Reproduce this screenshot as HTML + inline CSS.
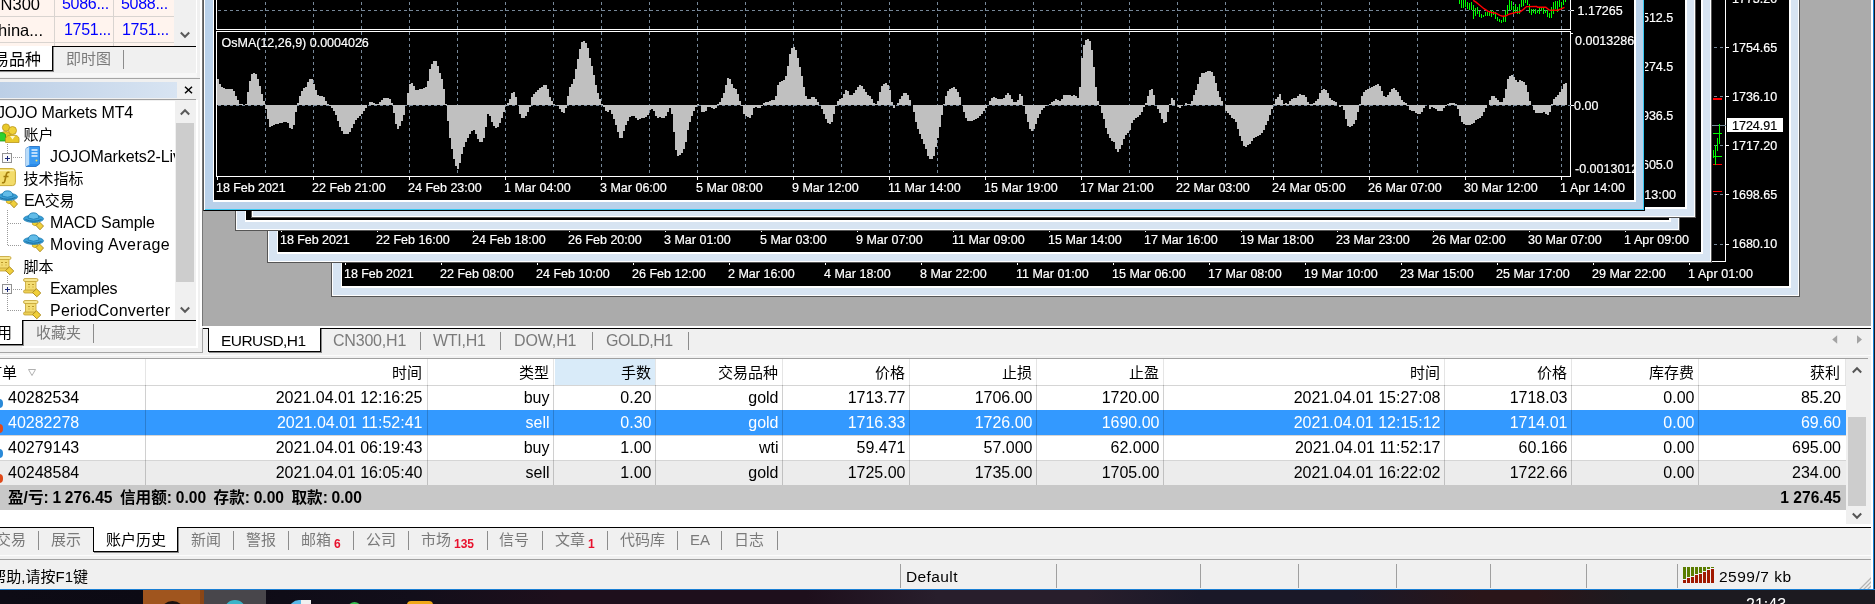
<!DOCTYPE html>
<html><head><meta charset="utf-8"><title>MT4</title><style>
*{box-sizing:border-box}
html,body{margin:0;padding:0}
body{width:1875px;height:604px;overflow:hidden;position:relative;background:#f0f0f0;font-family:"Liberation Sans","Noto Sans CJK SC",sans-serif;font-size:16px;color:#000}
.a{position:absolute}
.t{position:absolute;white-space:nowrap;line-height:20px;height:20px}
.g{color:#7a7a7a}
.w{position:absolute;background:#d7e4f2;border:1px solid #555;box-shadow:inset 1px 1px 0 #fff,inset -1px -1px 0 #fff}
.w.act{border-color:#5a5a5a #000 #000 #5a5a5a;box-shadow:inset 1px 1px 0 #fff,inset -1px -1px 0 #38c8f2}
.w .c{position:absolute;background:#000;border:2px solid #fff;border-top:0;border-left-width:1px;left:9px;right:8px;top:0;bottom:8px;overflow:hidden}
.ct{position:absolute;color:#fff;font-size:12.5px;line-height:14px;-webkit-text-stroke:0.2px #fff;white-space:nowrap;font-family:"Liberation Sans",sans-serif}
.sep{position:absolute;width:1px;background:#8c8c8c}
.vl{position:absolute;width:1px;background:#e3e3e3}
.row{position:absolute;left:0;width:1846px;height:25px}
.cell{position:absolute;top:-1px;height:25px;line-height:25px;text-align:right;white-space:nowrap;font-size:16px}
.hd .cell{font-size:15px}
</style></head><body>
<div class="a" id="mdi" style="left:202px;top:0;width:1669px;height:326px;background:#ababab;border-left:1px solid #777"></div>
<div class="w" id="w5" style="left:331px;top:-60px;width:1469px;height:357px;background:#d7e4f2"><div class="c"><span class="ct" style="left:2px;top:326px;;letter-spacing:-.05px">18 Feb 2021</span><i class="a" style="left:3px;top:321px;width:1px;height:3px;background:#fff"></i><span class="ct" style="left:98px;top:326px;">22 Feb 08:00</span><i class="a" style="left:99px;top:321px;width:1px;height:3px;background:#fff"></i><span class="ct" style="left:194px;top:326px;">24 Feb 10:00</span><i class="a" style="left:195px;top:321px;width:1px;height:3px;background:#fff"></i><span class="ct" style="left:290px;top:326px;">26 Feb 12:00</span><i class="a" style="left:291px;top:321px;width:1px;height:3px;background:#fff"></i><span class="ct" style="left:386px;top:326px;">2 Mar 16:00</span><i class="a" style="left:387px;top:321px;width:1px;height:3px;background:#fff"></i><span class="ct" style="left:482px;top:326px;">4 Mar 18:00</span><i class="a" style="left:483px;top:321px;width:1px;height:3px;background:#fff"></i><span class="ct" style="left:578px;top:326px;">8 Mar 22:00</span><i class="a" style="left:579px;top:321px;width:1px;height:3px;background:#fff"></i><span class="ct" style="left:674px;top:326px;">11 Mar 01:00</span><i class="a" style="left:675px;top:321px;width:1px;height:3px;background:#fff"></i><span class="ct" style="left:770px;top:326px;">15 Mar 06:00</span><i class="a" style="left:771px;top:321px;width:1px;height:3px;background:#fff"></i><span class="ct" style="left:866px;top:326px;">17 Mar 08:00</span><i class="a" style="left:867px;top:321px;width:1px;height:3px;background:#fff"></i><span class="ct" style="left:962px;top:326px;">19 Mar 10:00</span><i class="a" style="left:963px;top:321px;width:1px;height:3px;background:#fff"></i><span class="ct" style="left:1058px;top:326px;">23 Mar 15:00</span><i class="a" style="left:1059px;top:321px;width:1px;height:3px;background:#fff"></i><span class="ct" style="left:1154px;top:326px;">25 Mar 17:00</span><i class="a" style="left:1155px;top:321px;width:1px;height:3px;background:#fff"></i><span class="ct" style="left:1250px;top:326px;">29 Mar 22:00</span><i class="a" style="left:1251px;top:321px;width:1px;height:3px;background:#fff"></i><span class="ct" style="left:1346px;top:326px;;letter-spacing:.1px">1 Apr 01:00</span><i class="a" style="left:1347px;top:321px;width:1px;height:3px;background:#fff"></i><i class="a" style="left:1383px;top:0;width:1px;height:321px;background:#fff"></i><i class="a" style="left:1370px;top:320px;width:14px;height:1px;background:#fff"></i><span class="ct" style="left:1390px;top:50.6px;">1773.20</span><i class="a" style="left:1383px;top:58px;width:4px;height:1px;background:#fff"></i><i class="a" style="left:1372px;top:58px;width:9px;height:1px;background:repeating-linear-gradient(90deg,#778899 0 3px,transparent 3px 6px)"></i><span class="ct" style="left:1390px;top:99.5px;">1754.65</span><i class="a" style="left:1383px;top:106px;width:4px;height:1px;background:#fff"></i><i class="a" style="left:1372px;top:106px;width:9px;height:1px;background:repeating-linear-gradient(90deg,#778899 0 3px,transparent 3px 6px)"></i><span class="ct" style="left:1390px;top:148.7px;">1736.10</span><i class="a" style="left:1383px;top:155px;width:4px;height:1px;background:#fff"></i><i class="a" style="left:1372px;top:155px;width:9px;height:1px;background:repeating-linear-gradient(90deg,#778899 0 3px,transparent 3px 6px)"></i><span class="ct" style="left:1390px;top:197.6px;">1717.20</span><i class="a" style="left:1383px;top:204px;width:4px;height:1px;background:#fff"></i><i class="a" style="left:1372px;top:204px;width:9px;height:1px;background:repeating-linear-gradient(90deg,#778899 0 3px,transparent 3px 6px)"></i><span class="ct" style="left:1390px;top:246.8px;">1698.65</span><i class="a" style="left:1383px;top:253px;width:4px;height:1px;background:#fff"></i><i class="a" style="left:1372px;top:253px;width:9px;height:1px;background:repeating-linear-gradient(90deg,#778899 0 3px,transparent 3px 6px)"></i><span class="ct" style="left:1390px;top:296.2px;">1680.10</span><i class="a" style="left:1383px;top:303px;width:4px;height:1px;background:#fff"></i><i class="a" style="left:1372px;top:303px;width:9px;height:1px;background:repeating-linear-gradient(90deg,#778899 0 3px,transparent 3px 6px)"></i><span class="ct" style="left:1385px;top:177px;width:56px;height:14px;background:#fff;color:#000;line-height:16px;padding-left:5px;-webkit-text-stroke:0.2px #000">1724.91</span><i class="a" style="left:1370px;top:184px;width:14px;height:1px;background:#778899"></i><i class="a" style="left:1371px;top:157px;width:9px;height:2px;background:#f00"></i><i class="a" style="left:1371px;top:250px;width:9px;height:1px;background:#f00"></i><i class="a" style="left:1371px;top:223px;width:9px;height:1px;background:#f00"></i><svg class="a" style="left:1369px;top:179px" width="14" height="46" viewBox="0 0 14 46"><path d="M8.5 4v20M6.5 18v13M4.5 25v20M2.5 30v8M2 13.5h9M2 36.5h9" stroke="#0f0" stroke-width="1" fill="none" shape-rendering="crispEdges"/></svg></div></div>
<div class="w" id="w4" style="left:267px;top:-60px;width:1445px;height:323px;background:#d7e4f2"><div class="c"><span class="ct" style="left:2px;top:292px;;letter-spacing:-.05px">18 Feb 2021</span><i class="a" style="left:3px;top:289px;width:1px;height:2px;background:#fff"></i><span class="ct" style="left:98px;top:292px;">22 Feb 16:00</span><i class="a" style="left:99px;top:289px;width:1px;height:2px;background:#fff"></i><span class="ct" style="left:194px;top:292px;">24 Feb 18:00</span><i class="a" style="left:195px;top:289px;width:1px;height:2px;background:#fff"></i><span class="ct" style="left:290px;top:292px;">26 Feb 20:00</span><i class="a" style="left:291px;top:289px;width:1px;height:2px;background:#fff"></i><span class="ct" style="left:386px;top:292px;">3 Mar 01:00</span><i class="a" style="left:387px;top:289px;width:1px;height:2px;background:#fff"></i><span class="ct" style="left:482px;top:292px;">5 Mar 03:00</span><i class="a" style="left:483px;top:289px;width:1px;height:2px;background:#fff"></i><span class="ct" style="left:578px;top:292px;">9 Mar 07:00</span><i class="a" style="left:579px;top:289px;width:1px;height:2px;background:#fff"></i><span class="ct" style="left:674px;top:292px;">11 Mar 09:00</span><i class="a" style="left:675px;top:289px;width:1px;height:2px;background:#fff"></i><span class="ct" style="left:770px;top:292px;">15 Mar 14:00</span><i class="a" style="left:771px;top:289px;width:1px;height:2px;background:#fff"></i><span class="ct" style="left:866px;top:292px;">17 Mar 16:00</span><i class="a" style="left:867px;top:289px;width:1px;height:2px;background:#fff"></i><span class="ct" style="left:962px;top:292px;">19 Mar 18:00</span><i class="a" style="left:963px;top:289px;width:1px;height:2px;background:#fff"></i><span class="ct" style="left:1058px;top:292px;">23 Mar 23:00</span><i class="a" style="left:1059px;top:289px;width:1px;height:2px;background:#fff"></i><span class="ct" style="left:1154px;top:292px;">26 Mar 02:00</span><i class="a" style="left:1155px;top:289px;width:1px;height:2px;background:#fff"></i><span class="ct" style="left:1250px;top:292px;">30 Mar 07:00</span><i class="a" style="left:1251px;top:289px;width:1px;height:2px;background:#fff"></i><span class="ct" style="left:1346px;top:292px;;letter-spacing:.1px">1 Apr 09:00</span><i class="a" style="left:1347px;top:289px;width:1px;height:2px;background:#fff"></i></div></div>
<div class="w" id="w3" style="left:235px;top:-60px;width:1445px;height:291px;background:#d7e4f2"><div class="c"></div></div>
<div class="w" id="w2" style="left:251px;top:-60px;width:1445px;height:278px;background:#d7e4f2"><div class="c"><span class="ct" style="left:1373px;top:69.75px;">5512.5</span><span class="ct" style="left:1373px;top:118.75px;">5274.5</span><span class="ct" style="left:1373px;top:167.75px;">4936.5</span><span class="ct" style="left:1373px;top:216.75px;">4605.0</span><span class="ct" style="left:1349px;top:247px;;letter-spacing:.1px">1 Apr 13:00</span></div></div>
<div class="w act" id="w1" style="left:203px;top:-60px;width:1442px;height:271px;background:#b9d1ea"><div class="c"><div class="a" style="left:2px;top:49px;width:1355px;height:40px;border:1px solid #fff"></div><div class="a" style="left:2px;top:90px;width:1355px;height:146px;border:1px solid #fff"></div><svg class="a" style="left:3px;top:59px" width="1354" height="176" viewBox="217 0 1354 176" shape-rendering="crispEdges"><path d="M265.5 2V176M313.5 2V176M361.5 2V176M409.5 2V176M457.5 2V176M505.5 2V176M553.5 2V176M601.5 2V176M649.5 2V176M697.5 2V176M745.5 2V176M793.5 2V176M841.5 2V176M889.5 2V176M937.5 2V176M985.5 2V176M1033.5 2V176M1081.5 2V176M1129.5 2V176M1177.5 2V176M1225.5 2V176M1273.5 2V176M1321.5 2V176M1369.5 2V176M1417.5 2V176M1465.5 2V176M1513.5 2V176M1561.5 2V176" stroke="#778899" stroke-width="1" stroke-dasharray="3 3" fill="none"/><path d="M218 10.5H1571" stroke="#778899" stroke-width="1" stroke-dasharray="3 3" fill="none"/><path d="M218 105.5H1571" stroke="#778899" stroke-width="1" stroke-dasharray="3 3" fill="none"/><path d="M217 79h2v26h-2zM219 84h2v21h-2zM221 87h2v18h-2zM223 88h2v17h-2zM225 89h2v16h-2zM227 89h2v16h-2zM229 89h2v16h-2zM231 89h2v16h-2zM233 91h2v14h-2zM235 96h2v9h-2zM237 100h2v5h-2zM239 104h2v1h-2zM241 104h2v1h-2zM245 104h2v1h-2zM247 92h2v13h-2zM249 81h2v24h-2zM251 74h2v31h-2zM253 73h2v32h-2zM255 74h2v31h-2zM257 79h2v26h-2zM259 86h2v19h-2zM261 94h2v11h-2zM263 101h2v4h-2zM265 105h2v4h-2zM267 105h2v14h-2zM269 105h2v22h-2zM271 105h2v21h-2zM273 105h2v20h-2zM275 105h2v19h-2zM277 105h2v19h-2zM279 105h2v18h-2zM281 105h2v18h-2zM283 105h2v17h-2zM285 105h2v17h-2zM287 105h2v18h-2zM289 105h2v23h-2zM291 105h2v24h-2zM293 105h2v20h-2zM295 105h2v7h-2zM297 103h2v2h-2zM299 96h2v9h-2zM301 91h2v14h-2zM303 88h2v17h-2zM305 87h2v18h-2zM307 82h2v23h-2zM309 79h2v26h-2zM311 79h2v26h-2zM313 84h2v21h-2zM315 90h2v15h-2zM317 95h2v10h-2zM319 96h2v9h-2zM321 96h2v9h-2zM323 97h2v8h-2zM325 101h2v4h-2zM327 104h2v1h-2zM329 105h2v1h-2zM331 105h2v3h-2zM333 105h2v6h-2zM335 105h2v10h-2zM337 105h2v16h-2zM339 105h2v22h-2zM341 105h2v26h-2zM343 105h2v29h-2zM345 105h2v29h-2zM347 105h2v29h-2zM349 105h2v27h-2zM351 105h2v23h-2zM353 105h2v19h-2zM355 105h2v15h-2zM357 105h2v13h-2zM359 105h2v11h-2zM361 105h2v9h-2zM363 105h2v6h-2zM365 105h2v3h-2zM369 102h2v3h-2zM371 102h2v3h-2zM373 103h2v2h-2zM375 104h2v1h-2zM377 104h2v1h-2zM379 102h2v3h-2zM381 100h2v5h-2zM383 98h2v7h-2zM385 98h2v7h-2zM387 98h2v7h-2zM389 99h2v6h-2zM391 103h2v2h-2zM393 105h2v8h-2zM395 105h2v19h-2zM397 105h2v24h-2zM399 105h2v21h-2zM401 105h2v16h-2zM403 105h2v10h-2zM407 93h2v12h-2zM409 84h2v21h-2zM411 83h2v22h-2zM413 86h2v19h-2zM415 90h2v15h-2zM417 90h2v15h-2zM419 89h2v16h-2zM421 89h2v16h-2zM423 88h2v17h-2zM425 87h2v18h-2zM427 81h2v24h-2zM429 69h2v36h-2zM431 64h2v41h-2zM433 61h2v44h-2zM435 61h2v44h-2zM437 66h2v39h-2zM439 73h2v32h-2zM441 79h2v26h-2zM443 89h2v16h-2zM445 104h2v1h-2zM447 105h2v16h-2zM449 105h2v33h-2zM451 105h2v44h-2zM453 105h2v54h-2zM455 105h2v61h-2zM457 105h2v64h-2zM459 105h2v58h-2zM461 105h2v49h-2zM463 105h2v42h-2zM465 105h2v37h-2zM467 105h2v33h-2zM469 105h2v29h-2zM471 105h2v26h-2zM473 105h2v25h-2zM475 105h2v29h-2zM477 105h2v34h-2zM479 105h2v37h-2zM481 105h2v37h-2zM483 105h2v33h-2zM485 105h2v22h-2zM487 105h2v9h-2zM489 105h2v11h-2zM491 105h2v17h-2zM493 105h2v21h-2zM495 105h2v23h-2zM497 105h2v22h-2zM499 105h2v18h-2zM501 105h2v13h-2zM503 105h2v7h-2zM505 105h2v1h-2zM507 103h2v2h-2zM509 99h2v6h-2zM511 93h2v12h-2zM513 92h2v13h-2zM515 97h2v8h-2zM519 105h2v9h-2zM521 105h2v13h-2zM523 105h2v13h-2zM525 105h2v11h-2zM527 105h2v7h-2zM529 105h2v2h-2zM531 97h2v8h-2zM533 94h2v11h-2zM535 92h2v13h-2zM537 90h2v15h-2zM539 88h2v17h-2zM541 87h2v18h-2zM543 85h2v20h-2zM545 85h2v20h-2zM547 89h2v16h-2zM549 97h2v8h-2zM551 101h2v4h-2zM553 104h2v1h-2zM557 105h2v1h-2zM559 105h2v4h-2zM561 105h2v7h-2zM563 105h2v8h-2zM565 105h2v3h-2zM567 96h2v9h-2zM569 87h2v18h-2zM571 84h2v21h-2zM573 79h2v26h-2zM575 69h2v36h-2zM577 59h2v46h-2zM579 49h2v56h-2zM581 42h2v63h-2zM583 41h2v64h-2zM585 43h2v62h-2zM587 48h2v57h-2zM589 58h2v47h-2zM591 66h2v39h-2zM593 75h2v30h-2zM595 85h2v20h-2zM597 93h2v12h-2zM599 99h2v6h-2zM601 104h2v1h-2zM603 105h2v2h-2zM605 105h2v6h-2zM607 105h2v7h-2zM609 105h2v5h-2zM611 105h2v9h-2zM613 105h2v14h-2zM615 105h2v20h-2zM617 105h2v27h-2zM619 105h2v33h-2zM621 105h2v33h-2zM623 105h2v26h-2zM625 105h2v20h-2zM627 105h2v16h-2zM629 105h2v12h-2zM631 105h2v11h-2zM633 105h2v11h-2zM635 105h2v13h-2zM637 105h2v15h-2zM639 105h2v14h-2zM641 105h2v13h-2zM643 105h2v13h-2zM645 105h2v12h-2zM647 105h2v10h-2zM649 105h2v5h-2zM651 105h2v4h-2zM653 105h2v6h-2zM655 105h2v11h-2zM657 105h2v13h-2zM659 105h2v12h-2zM661 105h2v13h-2zM663 105h2v13h-2zM665 105h2v11h-2zM667 105h2v7h-2zM669 105h2v3h-2zM671 105h2v9h-2zM673 105h2v27h-2zM675 105h2v45h-2zM677 105h2v51h-2zM679 105h2v50h-2zM681 105h2v48h-2zM683 105h2v44h-2zM685 105h2v37h-2zM687 105h2v25h-2zM689 105h2v17h-2zM691 105h2v11h-2zM693 105h2v6h-2zM695 105h2v2h-2zM697 104h2v1h-2zM701 105h2v7h-2zM703 105h2v7h-2zM705 105h2v6h-2zM707 105h2v2h-2zM709 105h2v2h-2zM711 105h2v3h-2zM713 105h2v4h-2zM715 105h2v3h-2zM717 104h2v1h-2zM719 102h2v3h-2zM721 98h2v7h-2zM723 93h2v12h-2zM725 85h2v20h-2zM727 78h2v27h-2zM729 79h2v26h-2zM731 84h2v21h-2zM733 88h2v17h-2zM735 89h2v16h-2zM737 94h2v11h-2zM739 101h2v4h-2zM741 105h2v1h-2zM743 105h2v9h-2zM745 105h2v11h-2zM747 105h2v12h-2zM749 105h2v13h-2zM751 105h2v10h-2zM753 105h2v3h-2zM755 105h2v2h-2zM757 105h2v3h-2zM759 105h2v3h-2zM761 105h2v1h-2zM763 103h2v2h-2zM765 102h2v3h-2zM767 102h2v3h-2zM769 101h2v4h-2zM771 100h2v5h-2zM773 100h2v5h-2zM775 96h2v9h-2zM777 85h2v20h-2zM779 82h2v23h-2zM781 81h2v24h-2zM783 80h2v25h-2zM785 76h2v29h-2zM787 66h2v39h-2zM789 54h2v51h-2zM791 48h2v57h-2zM793 47h2v58h-2zM795 50h2v55h-2zM797 58h2v47h-2zM799 67h2v38h-2zM801 76h2v29h-2zM803 87h2v18h-2zM805 96h2v9h-2zM807 99h2v6h-2zM809 99h2v6h-2zM811 97h2v8h-2zM813 97h2v8h-2zM815 99h2v6h-2zM817 102h2v3h-2zM821 105h2v4h-2zM823 105h2v9h-2zM825 105h2v14h-2zM827 105h2v18h-2zM829 105h2v19h-2zM831 105h2v17h-2zM833 105h2v9h-2zM835 105h2v1h-2zM837 101h2v4h-2zM839 99h2v6h-2zM841 98h2v7h-2zM843 94h2v11h-2zM845 90h2v15h-2zM847 91h2v14h-2zM849 95h2v10h-2zM851 95h2v10h-2zM853 93h2v12h-2zM855 90h2v15h-2zM857 87h2v18h-2zM859 85h2v20h-2zM861 86h2v19h-2zM863 89h2v16h-2zM865 92h2v13h-2zM867 95h2v10h-2zM869 96h2v9h-2zM871 99h2v6h-2zM873 103h2v2h-2zM875 104h2v1h-2zM877 101h2v4h-2zM879 92h2v13h-2zM881 86h2v19h-2zM883 84h2v21h-2zM885 83h2v22h-2zM887 85h2v20h-2zM889 90h2v15h-2zM891 102h2v3h-2zM893 105h2v3h-2zM897 103h2v2h-2zM899 99h2v6h-2zM901 96h2v9h-2zM903 93h2v12h-2zM905 93h2v12h-2zM907 95h2v10h-2zM909 100h2v5h-2zM913 105h2v7h-2zM915 105h2v17h-2zM917 105h2v24h-2zM919 105h2v29h-2zM921 105h2v34h-2zM923 105h2v39h-2zM925 105h2v44h-2zM927 105h2v51h-2zM929 105h2v54h-2zM931 105h2v54h-2zM933 105h2v51h-2zM935 105h2v42h-2zM937 105h2v33h-2zM939 105h2v22h-2zM941 105h2v10h-2zM943 104h2v1h-2zM945 96h2v9h-2zM947 91h2v14h-2zM949 89h2v16h-2zM951 88h2v17h-2zM953 87h2v18h-2zM955 89h2v16h-2zM957 92h2v13h-2zM959 97h2v8h-2zM963 105h2v7h-2zM965 105h2v13h-2zM967 105h2v16h-2zM969 105h2v16h-2zM971 105h2v16h-2zM973 105h2v15h-2zM975 105h2v14h-2zM977 105h2v13h-2zM979 105h2v11h-2zM981 105h2v9h-2zM983 105h2v6h-2zM985 105h2v3h-2zM989 101h2v4h-2zM991 98h2v7h-2zM993 97h2v8h-2zM995 98h2v7h-2zM997 99h2v6h-2zM999 99h2v6h-2zM1001 99h2v6h-2zM1003 98h2v7h-2zM1005 95h2v10h-2zM1007 93h2v12h-2zM1009 95h2v10h-2zM1011 99h2v6h-2zM1013 102h2v3h-2zM1015 102h2v3h-2zM1017 100h2v5h-2zM1019 94h2v11h-2zM1021 96h2v9h-2zM1023 105h2v1h-2zM1025 105h2v9h-2zM1027 105h2v17h-2zM1029 105h2v24h-2zM1031 105h2v26h-2zM1033 105h2v24h-2zM1035 105h2v19h-2zM1037 105h2v13h-2zM1039 105h2v9h-2zM1041 105h2v5h-2zM1043 105h2v3h-2zM1045 105h2v1h-2zM1049 104h2v1h-2zM1051 102h2v3h-2zM1053 101h2v4h-2zM1055 99h2v6h-2zM1057 100h2v5h-2zM1059 101h2v4h-2zM1061 99h2v6h-2zM1063 95h2v10h-2zM1065 95h2v10h-2zM1067 95h2v10h-2zM1069 95h2v10h-2zM1071 96h2v9h-2zM1073 95h2v10h-2zM1075 96h2v9h-2zM1077 98h2v7h-2zM1079 87h2v18h-2zM1081 58h2v47h-2zM1083 45h2v60h-2zM1085 40h2v65h-2zM1087 39h2v66h-2zM1089 41h2v64h-2zM1091 50h2v55h-2zM1093 67h2v38h-2zM1095 87h2v18h-2zM1097 101h2v4h-2zM1099 105h2v1h-2zM1101 105h2v8h-2zM1103 105h2v14h-2zM1105 105h2v23h-2zM1107 105h2v29h-2zM1109 105h2v33h-2zM1111 105h2v36h-2zM1113 105h2v37h-2zM1115 105h2v44h-2zM1117 105h2v47h-2zM1119 105h2v44h-2zM1121 105h2v40h-2zM1123 105h2v34h-2zM1125 105h2v30h-2zM1127 105h2v28h-2zM1129 105h2v25h-2zM1131 105h2v18h-2zM1133 105h2v15h-2zM1135 105h2v13h-2zM1137 105h2v12h-2zM1139 105h2v10h-2zM1141 105h2v7h-2zM1143 105h2v2h-2zM1145 103h2v2h-2zM1147 96h2v9h-2zM1149 90h2v15h-2zM1151 89h2v16h-2zM1153 95h2v10h-2zM1157 105h2v4h-2zM1159 105h2v8h-2zM1161 105h2v14h-2zM1163 105h2v18h-2zM1165 105h2v17h-2zM1167 105h2v7h-2zM1169 104h2v1h-2zM1171 98h2v7h-2zM1173 100h2v5h-2zM1177 105h2v2h-2zM1179 105h2v3h-2zM1181 105h2v1h-2zM1185 103h2v2h-2zM1187 104h2v1h-2zM1189 104h2v1h-2zM1191 101h2v4h-2zM1193 95h2v10h-2zM1195 90h2v15h-2zM1197 84h2v21h-2zM1199 77h2v28h-2zM1201 73h2v32h-2zM1203 73h2v32h-2zM1205 72h2v33h-2zM1207 71h2v34h-2zM1209 71h2v34h-2zM1211 72h2v33h-2zM1213 76h2v29h-2zM1215 83h2v22h-2zM1217 91h2v14h-2zM1219 97h2v8h-2zM1221 101h2v4h-2zM1225 105h2v6h-2zM1227 105h2v8h-2zM1229 105h2v10h-2zM1231 105h2v13h-2zM1233 105h2v14h-2zM1235 105h2v17h-2zM1237 105h2v24h-2zM1239 105h2v31h-2zM1241 105h2v36h-2zM1243 105h2v41h-2zM1245 105h2v42h-2zM1247 105h2v40h-2zM1249 105h2v39h-2zM1251 105h2v36h-2zM1253 105h2v33h-2zM1255 105h2v32h-2zM1257 105h2v31h-2zM1259 105h2v30h-2zM1261 105h2v28h-2zM1263 105h2v25h-2zM1265 105h2v20h-2zM1267 105h2v16h-2zM1269 105h2v10h-2zM1271 105h2v4h-2zM1273 104h2v1h-2zM1275 99h2v6h-2zM1277 97h2v8h-2zM1279 94h2v11h-2zM1281 100h2v5h-2zM1283 104h2v1h-2zM1285 103h2v2h-2zM1287 104h2v1h-2zM1289 101h2v4h-2zM1291 99h2v6h-2zM1293 98h2v7h-2zM1295 98h2v7h-2zM1297 96h2v9h-2zM1299 94h2v11h-2zM1301 95h2v10h-2zM1303 95h2v10h-2zM1305 97h2v8h-2zM1307 102h2v3h-2zM1309 104h2v1h-2zM1311 104h2v1h-2zM1313 103h2v2h-2zM1315 101h2v4h-2zM1317 99h2v6h-2zM1319 93h2v12h-2zM1321 90h2v15h-2zM1323 89h2v16h-2zM1325 90h2v15h-2zM1327 93h2v12h-2zM1329 98h2v7h-2zM1331 100h2v5h-2zM1333 101h2v4h-2zM1335 102h2v3h-2zM1339 105h2v2h-2zM1341 105h2v1h-2zM1343 105h2v5h-2zM1345 105h2v14h-2zM1347 105h2v21h-2zM1349 105h2v22h-2zM1351 105h2v21h-2zM1353 105h2v19h-2zM1355 105h2v15h-2zM1357 105h2v7h-2zM1359 104h2v1h-2zM1361 96h2v9h-2zM1363 92h2v13h-2zM1365 90h2v15h-2zM1367 89h2v16h-2zM1369 88h2v17h-2zM1371 87h2v18h-2zM1373 86h2v19h-2zM1375 85h2v20h-2zM1377 84h2v21h-2zM1379 86h2v19h-2zM1381 91h2v14h-2zM1383 96h2v9h-2zM1385 97h2v8h-2zM1387 95h2v10h-2zM1389 92h2v13h-2zM1391 89h2v16h-2zM1393 88h2v17h-2zM1395 90h2v15h-2zM1397 92h2v13h-2zM1399 96h2v9h-2zM1401 100h2v5h-2zM1403 102h2v3h-2zM1405 103h2v2h-2zM1407 105h2v1h-2zM1409 105h2v5h-2zM1411 105h2v6h-2zM1413 105h2v6h-2zM1415 105h2v8h-2zM1417 105h2v9h-2zM1419 105h2v9h-2zM1421 105h2v7h-2zM1423 105h2v3h-2zM1429 105h2v4h-2zM1431 105h2v2h-2zM1433 105h2v3h-2zM1435 105h2v4h-2zM1437 105h2v6h-2zM1439 105h2v6h-2zM1441 105h2v6h-2zM1443 105h2v3h-2zM1445 105h2v1h-2zM1447 104h2v1h-2zM1449 103h2v2h-2zM1451 103h2v2h-2zM1453 103h2v2h-2zM1455 104h2v1h-2zM1457 105h2v4h-2zM1459 105h2v11h-2zM1461 105h2v17h-2zM1463 105h2v19h-2zM1465 105h2v20h-2zM1467 105h2v20h-2zM1469 105h2v20h-2zM1471 105h2v19h-2zM1473 105h2v18h-2zM1475 105h2v15h-2zM1477 105h2v14h-2zM1479 105h2v13h-2zM1481 105h2v11h-2zM1483 105h2v7h-2zM1485 105h2v3h-2zM1489 100h2v5h-2zM1491 96h2v9h-2zM1493 96h2v9h-2zM1495 98h2v7h-2zM1497 100h2v5h-2zM1499 102h2v3h-2zM1501 102h2v3h-2zM1503 98h2v7h-2zM1505 89h2v16h-2zM1507 79h2v26h-2zM1509 76h2v29h-2zM1511 75h2v30h-2zM1513 77h2v28h-2zM1515 80h2v25h-2zM1517 82h2v23h-2zM1519 80h2v25h-2zM1521 81h2v24h-2zM1523 82h2v23h-2zM1525 85h2v20h-2zM1527 92h2v13h-2zM1529 101h2v4h-2zM1533 105h2v5h-2zM1535 105h2v8h-2zM1537 105h2v8h-2zM1539 105h2v8h-2zM1541 105h2v8h-2zM1543 105h2v7h-2zM1545 105h2v9h-2zM1547 105h2v10h-2zM1549 105h2v7h-2zM1551 104h2v1h-2zM1553 99h2v6h-2zM1555 97h2v8h-2zM1557 95h2v10h-2zM1559 92h2v13h-2zM1561 89h2v16h-2zM1563 84h2v21h-2zM1565 83h2v22h-2z" fill="#c0c0c0"/><path d="M1459.5 0V4M1461.5 0V8M1463.5 0V8M1465.5 0V7M1467.5 2V9M1469.5 3V10M1471.5 2V10M1473.5 5V19M1475.5 8V16M1477.5 7V14M1479.5 11V17M1481.5 14V18M1483.5 15V17M1485.5 12V16M1487.5 12V16M1489.5 12V16M1491.5 10V17M1493.5 11V15M1495.5 12V19M1497.5 17V21M1499.5 19V22M1501.5 20V23M1503.5 17V22M1505.5 10V22M1507.5 5V14M1509.5 0V10M1511.5 1V10M1513.5 6V14M1515.5 4V12M1517.5 7V14M1519.5 4V14M1521.5 0V7M1523.5 0V6M1525.5 0V3M1527.5 0V5M1529.5 4V13M1531.5 9V15M1533.5 9V13M1535.5 9V14M1537.5 10V13M1539.5 8V14M1541.5 8V11M1543.5 8V14M1545.5 10V13M1547.5 10V17M1549.5 13V18M1551.5 7V18M1553.5 2V14M1555.5 1V9M1557.5 1V12M1559.5 0V7M1561.5 2V9M1563.5 0V5M1565.5 0V2" stroke="#00ff00" stroke-width="1" fill="none"/><path d="M1473.2 0.35 L1476 2.1 L1479.8 5.2 L1484 8.7 L1487.8 11.1 L1491.6 12.5 L1495.8 13.2 L1499.9 15.4 L1502.7 16.2 L1505.5 16.0 L1508.5 14.3 L1512.6 13.3 L1515.9 12.4 L1519.8 12.0 L1523.2 9.6 L1526.6 6.6 L1536.6 6.5 L1537.6 7.3 L1545.8 7.3 L1549.2 10.0 L1557.2 10.3 L1561.2 8.9 L1564.5 7.3" stroke="#ff0000" stroke-width="1.4" fill="none" shape-rendering="auto"/></svg><span class="ct" style="left:7.5px;top:94.7px;">OsMA(12,26,9) 0.0004026</span><span class="ct" style="left:2px;top:240px;;letter-spacing:-.05px">18 Feb 2021</span><i class="a" style="left:3px;top:236px;width:1px;height:3px;background:#fff"></i><span class="ct" style="left:98px;top:240px;">22 Feb 21:00</span><i class="a" style="left:99px;top:236px;width:1px;height:3px;background:#fff"></i><span class="ct" style="left:194px;top:240px;">24 Feb 23:00</span><i class="a" style="left:195px;top:236px;width:1px;height:3px;background:#fff"></i><span class="ct" style="left:290px;top:240px;">1 Mar 04:00</span><i class="a" style="left:291px;top:236px;width:1px;height:3px;background:#fff"></i><span class="ct" style="left:386px;top:240px;">3 Mar 06:00</span><i class="a" style="left:387px;top:236px;width:1px;height:3px;background:#fff"></i><span class="ct" style="left:482px;top:240px;">5 Mar 08:00</span><i class="a" style="left:483px;top:236px;width:1px;height:3px;background:#fff"></i><span class="ct" style="left:578px;top:240px;">9 Mar 12:00</span><i class="a" style="left:579px;top:236px;width:1px;height:3px;background:#fff"></i><span class="ct" style="left:674px;top:240px;">11 Mar 14:00</span><i class="a" style="left:675px;top:236px;width:1px;height:3px;background:#fff"></i><span class="ct" style="left:770px;top:240px;">15 Mar 19:00</span><i class="a" style="left:771px;top:236px;width:1px;height:3px;background:#fff"></i><span class="ct" style="left:866px;top:240px;">17 Mar 21:00</span><i class="a" style="left:867px;top:236px;width:1px;height:3px;background:#fff"></i><span class="ct" style="left:962px;top:240px;">22 Mar 03:00</span><i class="a" style="left:963px;top:236px;width:1px;height:3px;background:#fff"></i><span class="ct" style="left:1058px;top:240px;">24 Mar 05:00</span><i class="a" style="left:1059px;top:236px;width:1px;height:3px;background:#fff"></i><span class="ct" style="left:1154px;top:240px;">26 Mar 07:00</span><i class="a" style="left:1155px;top:236px;width:1px;height:3px;background:#fff"></i><span class="ct" style="left:1250px;top:240px;">30 Mar 12:00</span><i class="a" style="left:1251px;top:236px;width:1px;height:3px;background:#fff"></i><span class="ct" style="left:1346px;top:240px;;letter-spacing:.1px">1 Apr 14:00</span><i class="a" style="left:1347px;top:236px;width:1px;height:3px;background:#fff"></i><span class="ct" style="left:1363.5px;top:63px;">1.17265</span><span class="ct" style="left:1361px;top:93px;">0.0013286</span><span class="ct" style="left:1360px;top:158px;">0.00</span><span class="ct" style="left:1361px;top:220.5px;">-0.0013012</span><i class="a" style="left:1357px;top:69px;width:3px;height:1px;background:#fff"></i><i class="a" style="left:1357px;top:164px;width:3px;height:1px;background:#fff"></i><i class="a" style="left:1357px;top:92px;width:2px;height:1px;background:#fff"></i></div></div>
<div class="a" id="left" style="left:0;top:0;width:202px;height:354px;background:#f0f0f0;overflow:hidden">
<div class="a" style="left:0;top:0;width:174px;height:47px;background:#fff4ee;overflow:hidden">
<i class="a" style="left:0;top:16px;width:174px;height:1px;background:#d9d4d0"></i>
<i class="a" style="left:0;top:42px;width:174px;height:1px;background:#d9d4d0"></i>
<i class="a" style="left:54px;top:0;width:1px;height:47px;background:#d9d4d0"></i>
<i class="a" style="left:113px;top:0;width:1px;height:47px;background:#d9d4d0"></i>
<span class="t" style="right:134px;top:-6px;font-size:16.5px">CN300</span>
<span class="t" style="left:62px;top:-6px;color:#0000ff;font-size:16px;letter-spacing:-.3px">5086...</span>
<span class="t" style="left:121px;top:-6px;color:#0000ff;font-size:16px;letter-spacing:-.3px">5088...</span>
<span class="t" style="right:131px;top:19.5px;font-size:16.5px">China...</span>
<span class="t" style="left:64px;top:19.5px;color:#0000ff;font-size:16px;letter-spacing:-.3px">1751...</span>
<span class="t" style="left:122px;top:19.5px;color:#0000ff;font-size:16px;letter-spacing:-.3px">1751...</span>
</div>
<svg class="a" style="left:178.5px;top:30px" width="12" height="10" viewBox="0 0 12 10"><path d="M1.8 2.5L6 6.8L10.2 2.5" stroke="#5a5a5a" stroke-width="2" fill="none"/></svg>
<i class="a" style="left:52px;top:46px;width:144px;height:1px;background:#000"></i>
<div class="a" style="left:-2px;top:46px;width:55px;height:25px;background:#fff;border-right:1px solid #000;border-bottom:1px solid #000;box-shadow:1px 1px 0 #8a8a8a"></div>
<span class="t" style="right:161px;top:49.5px;font-size:16px">交易品种</span>
<span class="t g" style="left:66px;top:49px;font-size:15px">即时图</span>
<i class="sep" style="left:123px;top:50px;height:19px"></i>
<i class="a" style="left:0;top:73px;width:197px;height:4px;background:#f7f7f7"></i>
<i class="a" style="left:0;top:78px;width:201px;height:1px;background:#a5a5a5"></i>
<i class="a" style="left:200px;top:0;width:2px;height:328px;background:#fff"></i>
<i class="a" style="left:196px;top:0;width:1px;height:73px;background:#fff"></i>
<div class="a" style="left:0;top:82px;width:177px;height:16px;background:linear-gradient(90deg,#bccfe6,#d8e4f2)"></div>
<svg class="a" style="left:184px;top:86px" width="9" height="8" viewBox="0 0 9 8"><path d="M1 .8L8 7.2M8 .8L1 7.2" stroke="#000" stroke-width="1.5"/></svg>
<div class="a" style="left:0;top:99px;width:196px;height:222px;border-top:1px solid #a0a0a0;background:#f0f0f0">
<div class="a" style="left:0;top:1px;width:175px;height:220px;background:#fff;overflow:hidden" id="tree">
<span class="t" style="left:-3px;top:1px;font-size:16px;letter-spacing:-0.17px;height:22px;line-height:22px">JOJO Markets MT4</span>
<span class="t" style="left:23.5px;top:23px;font-size:15px;letter-spacing:0px;height:22px;line-height:22px">账户</span>
<span class="t" style="left:50px;top:45px;font-size:16px;letter-spacing:-0.1px;height:22px;line-height:22px">JOJOMarkets2-Live</span>
<span class="t" style="left:23.5px;top:67px;font-size:15px;letter-spacing:0px;height:22px;line-height:22px">技术指标</span>
<span class="t" style="left:24px;top:89px;font-size:16px;letter-spacing:-0.3px;height:22px;line-height:22px">EA<span style="font-size:15px">交易</span></span>
<span class="t" style="left:50px;top:111px;font-size:16px;letter-spacing:-0.1px;height:22px;line-height:22px">MACD Sample</span>
<span class="t" style="left:50px;top:133px;font-size:16px;letter-spacing:0.4px;height:22px;line-height:22px">Moving Average</span>
<span class="t" style="left:23.5px;top:155px;font-size:15px;letter-spacing:0px;height:22px;line-height:22px">脚本</span>
<span class="t" style="left:50px;top:177px;font-size:16px;letter-spacing:-0.4px;height:22px;line-height:22px">Examples</span>
<span class="t" style="left:50px;top:199px;font-size:16px;letter-spacing:0.25px;height:22px;line-height:22px">PeriodConverter</span>
<svg class="a" style="left:0px;top:22px" width="20" height="21" viewBox="0 0 20 21">
<circle cx="6" cy="4.5" r="3.6" fill="#e9c92a" stroke="#b8941a" stroke-width=".8"/>
<path d="M0 10.5Q6 6.5 11 10.5V15H0z" fill="#e6c425" stroke="#b8941a" stroke-width=".8"/>
<path d="M-3 11Q2 8 5.5 11.5V18H-3z" fill="#2fd12f" stroke="#1a9a1a" stroke-width=".8"/>
<circle cx="12.5" cy="7.5" r="4" fill="#f0d23a" stroke="#b8941a" stroke-width=".8"/>
<path d="M5.5 19.5V15.5Q6.5 12 12.5 12Q18.5 12 19 15.5V19.5z" fill="#e9c92a" stroke="#b8941a" stroke-width=".8"/>
<path d="M10 13L12.5 16.5L15 13" fill="#fff8d0" stroke="none"/>
</svg>
<svg class="a" style="left:2px;top:52px" width="10" height="10" viewBox="0 0 10 10" shape-rendering="crispEdges">
<rect x=".5" y=".5" width="9" height="9" fill="#fafafa" stroke="#919191"/><path d="M2.5 5h5M5 2.5v5" stroke="#1c2a7a" stroke-width="1"/></svg>
<svg class="a" style="left:25px;top:45px" width="16" height="21" viewBox="0 0 16 21">
<path d="M1 2.5L4.5 0.5H14.5V18L11 20.5H1z" fill="#2b8cea" stroke="#1868c0" stroke-width=".8"/>
<path d="M1 2.5L4.5 0.8V18.5L1 20.3z" fill="#b8dcfa"/>
<path d="M4.5 1H14.3V18H4.5z" fill="#3a9af2"/>
<path d="M6.5 4h6M6.5 7h6M6.5 10h6" stroke="#e8f4ff" stroke-width="1.3"/>
<circle cx="11.5" cy="14.5" r="1" fill="#f8e060"/>
</svg>
<svg class="a" style="left:0px;top:67px" width="17" height="19" viewBox="0 0 17 19">
<rect x="-3" y=".6" width="18.4" height="17" rx="3" fill="#f3dc6a" stroke="#c9a932" stroke-width="1"/>
<path d="M-2 2.5h16" stroke="#fbf0b0" stroke-width="1.5"/>
<path d="M9.5 4.5Q7 3.5 6.3 6.5L4.8 13Q4.2 15.5 2 14.5M3.5 8.5h5" stroke="#a27c0a" stroke-width="1.6" fill="none"/>
</svg>
<svg class="a" style="left:-3px;top:89px" width="22" height="19" viewBox="0 0 22 19">
<path d="M9 8.5L15 8.5L14 13Q11.5 14.5 9.5 12.5z" fill="#f0d030" stroke="#b8941a" stroke-width=".7"/>
<path d="M13 13.5L16.5 10L20.5 14L17 17.8z" fill="#f0cf3a" stroke="#a8861a" stroke-width=".9"/>
<ellipse cx="10.5" cy="6.8" rx="10" ry="3.6" fill="#3aa0d8" stroke="#1878b0" stroke-width=".8"/>
<path d="M5 6Q5.5 .8 10.5 .8Q15.5 .8 16 6Q10.5 8.5 5 6z" fill="#62bce8" stroke="#1878b0" stroke-width=".8"/>
<path d="M2.5 7.5Q10.5 11 18.5 7.5" stroke="#1c6a98" stroke-width=".9" fill="none"/>
</svg>
<svg class="a" style="left:23px;top:111px" width="22" height="19" viewBox="0 0 22 19">
<path d="M9 8.5L15 8.5L14 13Q11.5 14.5 9.5 12.5z" fill="#f0d030" stroke="#b8941a" stroke-width=".7"/>
<path d="M13 13.5L16.5 10L20.5 14L17 17.8z" fill="#f0cf3a" stroke="#a8861a" stroke-width=".9"/>
<ellipse cx="10.5" cy="6.8" rx="10" ry="3.6" fill="#3aa0d8" stroke="#1878b0" stroke-width=".8"/>
<path d="M5 6Q5.5 .8 10.5 .8Q15.5 .8 16 6Q10.5 8.5 5 6z" fill="#62bce8" stroke="#1878b0" stroke-width=".8"/>
<path d="M2.5 7.5Q10.5 11 18.5 7.5" stroke="#1c6a98" stroke-width=".9" fill="none"/>
</svg>
<svg class="a" style="left:23px;top:133px" width="22" height="19" viewBox="0 0 22 19">
<path d="M9 8.5L15 8.5L14 13Q11.5 14.5 9.5 12.5z" fill="#f0d030" stroke="#b8941a" stroke-width=".7"/>
<path d="M13 13.5L16.5 10L20.5 14L17 17.8z" fill="#f0cf3a" stroke="#a8861a" stroke-width=".9"/>
<ellipse cx="10.5" cy="6.8" rx="10" ry="3.6" fill="#3aa0d8" stroke="#1878b0" stroke-width=".8"/>
<path d="M5 6Q5.5 .8 10.5 .8Q15.5 .8 16 6Q10.5 8.5 5 6z" fill="#62bce8" stroke="#1878b0" stroke-width=".8"/>
<path d="M2.5 7.5Q10.5 11 18.5 7.5" stroke="#1c6a98" stroke-width=".9" fill="none"/>
</svg>
<svg class="a" style="left:-4px;top:155px" width="19" height="20" viewBox="0 0 19 20">
<path d="M2.5 2.2H13V13.5H2.5z" fill="#f3dc72" stroke="#c2a030" stroke-width=".8"/>
<rect x=".5" y=".5" width="14.5" height="3" rx="1.5" fill="#f7e68e" stroke="#c2a030" stroke-width=".8"/>
<rect x=".5" y="12" width="14.5" height="3" rx="1.5" fill="#eccf55" stroke="#c2a030" stroke-width=".8"/>
<path d="M5 6.5h2M9 6.5h2M5.5 9h1M9.5 9h1" stroke="#b8962a" stroke-width="1"/>
<path d="M9.5 14.5L13.5 10.8L17.8 15L13.8 18.8z" fill="#f0cf3a" stroke="#a8861a" stroke-width=".9"/>
</svg>
<svg class="a" style="left:23px;top:177px" width="19" height="20" viewBox="0 0 19 20">
<path d="M2.5 2.2H13V13.5H2.5z" fill="#f3dc72" stroke="#c2a030" stroke-width=".8"/>
<rect x=".5" y=".5" width="14.5" height="3" rx="1.5" fill="#f7e68e" stroke="#c2a030" stroke-width=".8"/>
<rect x=".5" y="12" width="14.5" height="3" rx="1.5" fill="#eccf55" stroke="#c2a030" stroke-width=".8"/>
<path d="M5 6.5h2M9 6.5h2M5.5 9h1M9.5 9h1" stroke="#b8962a" stroke-width="1"/>
<path d="M9.5 14.5L13.5 10.8L17.8 15L13.8 18.8z" fill="#f0cf3a" stroke="#a8861a" stroke-width=".9"/>
</svg>
<svg class="a" style="left:23px;top:199px" width="19" height="20" viewBox="0 0 19 20">
<path d="M2.5 2.2H13V13.5H2.5z" fill="#f3dc72" stroke="#c2a030" stroke-width=".8"/>
<rect x=".5" y=".5" width="14.5" height="3" rx="1.5" fill="#f7e68e" stroke="#c2a030" stroke-width=".8"/>
<rect x=".5" y="12" width="14.5" height="3" rx="1.5" fill="#eccf55" stroke="#c2a030" stroke-width=".8"/>
<path d="M5 6.5h2M9 6.5h2M5.5 9h1M9.5 9h1" stroke="#b8962a" stroke-width="1"/>
<path d="M9.5 14.5L13.5 10.8L17.8 15L13.8 18.8z" fill="#f0cf3a" stroke="#a8861a" stroke-width=".9"/>
</svg>
<svg class="a" style="left:2px;top:183px" width="10" height="10" viewBox="0 0 10 10" shape-rendering="crispEdges">
<rect x=".5" y=".5" width="9" height="9" fill="#fafafa" stroke="#919191"/><path d="M2.5 5h5M5 2.5v5" stroke="#1c2a7a" stroke-width="1"/></svg>
<i class="a" style="left:7px;top:43px;width:1px;height:9px;background:repeating-linear-gradient(180deg,#9a9a9a 0 1px,transparent 1px 2px)"></i>
<i class="a" style="left:13px;top:56px;width:9px;height:1px;background:repeating-linear-gradient(90deg,#9a9a9a 0 1px,transparent 1px 2px)"></i>
<i class="a" style="left:7px;top:109px;width:1px;height:36px;background:repeating-linear-gradient(180deg,#9a9a9a 0 1px,transparent 1px 2px)"></i>
<i class="a" style="left:8px;top:122px;width:14px;height:1px;background:repeating-linear-gradient(90deg,#9a9a9a 0 1px,transparent 1px 2px)"></i>
<i class="a" style="left:8px;top:144px;width:14px;height:1px;background:repeating-linear-gradient(90deg,#9a9a9a 0 1px,transparent 1px 2px)"></i>
<i class="a" style="left:7px;top:175px;width:1px;height:8px;background:repeating-linear-gradient(180deg,#9a9a9a 0 1px,transparent 1px 2px)"></i>
<i class="a" style="left:7px;top:193px;width:1px;height:17px;background:repeating-linear-gradient(180deg,#9a9a9a 0 1px,transparent 1px 2px)"></i>
<i class="a" style="left:13px;top:188px;width:9px;height:1px;background:repeating-linear-gradient(90deg,#9a9a9a 0 1px,transparent 1px 2px)"></i>
<i class="a" style="left:8px;top:209px;width:14px;height:1px;background:repeating-linear-gradient(90deg,#9a9a9a 0 1px,transparent 1px 2px)"></i>
</div>
<div class="a" style="left:175.5px;top:23px;width:18px;height:159px;background:#cdcdcd"></div>
<svg class="a" style="left:178.5px;top:7px" width="12" height="10" viewBox="0 0 12 10"><path d="M1.8 7.5L6 3.2L10.2 7.5" stroke="#5a5a5a" stroke-width="2" fill="none"/></svg>
<svg class="a" style="left:178.5px;top:205px" width="12" height="10" viewBox="0 0 12 10"><path d="M1.8 2.5L6 6.8L10.2 2.5" stroke="#5a5a5a" stroke-width="2" fill="none"/></svg>
</div>
<i class="a" style="left:22px;top:320px;width:174px;height:1px;background:#000"></i>
<div class="a" style="left:-2px;top:320px;width:25px;height:25px;background:#fff;border-right:1px solid #000;border-bottom:1px solid #000;box-shadow:1px 1px 0 #8a8a8a"></div>
<span class="t" style="right:190px;top:322.5px;font-size:15px">常用</span>
<span class="t g" style="left:36px;top:322.5px;font-size:15px">收藏夹</span>
<i class="sep" style="left:93px;top:324px;height:19px"></i>
<i class="a" style="left:22px;top:346px;width:176px;height:2px;background:#fff"></i>
<i class="a" style="left:196px;top:100px;width:2px;height:248px;background:#fff"></i>
</div>
<i class="a" style="left:0;top:352px;width:203px;height:1px;background:#a5a5a5"></i>
<i class="a" style="left:202px;top:328px;width:1px;height:25px;background:#a5a5a5"></i>
<div class="a" id="ctabs" style="left:203px;top:326px;width:1668px;height:29px;background:#f0f0f0">
<i class="a" style="left:0;top:0;width:1668px;height:2px;background:#fff"></i>
<i class="a" style="left:0;top:2px;width:1668px;height:1px;background:#000"></i>
<div class="a" style="left:5px;top:2px;width:113px;height:24px;background:#fff;border:1px solid #000;border-top:0;box-shadow:1px 1px 0 #8a8a8a"></div>
<span class="t " style="left:18px;top:5px;font-size:15.5px;letter-spacing:-0.57px">EURUSD,H1</span>
<span class="t g" style="left:130px;top:5px;font-size:16px;letter-spacing:-0.2px">CN300,H1</span>
<span class="t g" style="left:230px;top:5px;font-size:16px;letter-spacing:-0.28px">WTI,H1</span>
<span class="t g" style="left:311px;top:5px;font-size:16px;letter-spacing:-0.13px">DOW,H1</span>
<span class="t g" style="left:403px;top:5px;font-size:16px;letter-spacing:-0.5px">GOLD,H1</span>
<i class="sep" style="left:217px;top:6px;height:18px"></i>
<i class="sep" style="left:297px;top:6px;height:18px"></i>
<i class="sep" style="left:389px;top:6px;height:18px"></i>
<i class="sep" style="left:485px;top:6px;height:18px"></i>
<svg class="a" style="left:1628px;top:9px" width="32" height="9" viewBox="0 0 32 9"><path d="M6.2 0.3V8.7L1.2 4.5zM26 0.3V8.7L31 4.5z" fill="#a3a3a3"/></svg>
</div>
<i class="a" style="left:0;top:355px;width:1871px;height:1px;background:#fbfbfb"></i>
<i class="a" style="left:0;top:358px;width:1871px;height:1px;background:#a0a0a0"></i>
<div class="a" id="term" style="left:0;top:359px;width:1868px;height:165px;background:#fff;overflow:hidden">
<div class="row hd" style="top:0;height:26px">
<i class="a" style="left:555px;top:0;width:101px;height:26px;background:#d9ebf9"></i>
<span class="cell" style="right:1829px;top:1px">订单</span>
<span class="cell" style="right:1424px;top:1px">时间</span>
<span class="cell" style="right:1297px;top:1px">类型</span>
<span class="cell" style="right:1195px;top:1px">手数</span>
<span class="cell" style="right:1068px;top:1px">交易品种</span>
<span class="cell" style="right:941px;top:1px">价格</span>
<span class="cell" style="right:814px;top:1px">止损</span>
<span class="cell" style="right:687px;top:1px">止盈</span>
<span class="cell" style="right:406px;top:1px">时间</span>
<span class="cell" style="right:279px;top:1px">价格</span>
<span class="cell" style="right:152px;top:1px">库存费</span>
<span class="cell" style="right:6px;top:1px">获利</span>
<svg class="a" style="left:28px;top:10px" width="9" height="8" viewBox="0 0 9 8"><path d="M0.5 0.5H7.5L4 6.5z" stroke="#a8a8a8" stroke-width=".9" fill="none"/></svg>
</div>
<div class="row" style="top:26px;background:#fff;color:#000;border-top:1px solid #d5d5d5">
<i class="a" style="left:-5px;top:13px;width:8px;height:9px;border-radius:4px;background:#2a8ad8"></i>
<span class="cell" style="left:8px;text-align:left">40282534</span>
<span class="cell" style="right:1423.5px">2021.04.01 12:16:25</span>
<span class="cell" style="right:1296.5px">buy</span>
<span class="cell" style="right:1194.5px">0.20</span>
<span class="cell" style="right:1067.5px">gold</span>
<span class="cell" style="right:940.5px">1713.77</span>
<span class="cell" style="right:813.5px">1706.00</span>
<span class="cell" style="right:686.5px">1720.00</span>
<span class="cell" style="right:405.5px">2021.04.01 15:27:08</span>
<span class="cell" style="right:278.5px">1718.03</span>
<span class="cell" style="right:151.5px">0.00</span>
<span class="cell" style="right:5px">85.20</span>
</div>
<div class="row" style="top:51px;background:#3399ff;color:#fff;border-top:1px solid #3399ff">
<i class="a" style="left:-5px;top:13px;width:8px;height:9px;border-radius:4px;background:#e04a1a"></i>
<span class="cell" style="left:8px;text-align:left">40282278</span>
<span class="cell" style="right:1423.5px">2021.04.01 11:52:41</span>
<span class="cell" style="right:1296.5px">sell</span>
<span class="cell" style="right:1194.5px">0.30</span>
<span class="cell" style="right:1067.5px">gold</span>
<span class="cell" style="right:940.5px">1716.33</span>
<span class="cell" style="right:813.5px">1726.00</span>
<span class="cell" style="right:686.5px">1690.00</span>
<span class="cell" style="right:405.5px">2021.04.01 12:15:12</span>
<span class="cell" style="right:278.5px">1714.01</span>
<span class="cell" style="right:151.5px">0.00</span>
<span class="cell" style="right:5px">69.60</span>
</div>
<div class="row" style="top:76px;background:#fff;color:#000;border-top:1px solid #d5d5d5">
<i class="a" style="left:-5px;top:13px;width:8px;height:9px;border-radius:4px;background:#2a8ad8"></i>
<span class="cell" style="left:8px;text-align:left">40279143</span>
<span class="cell" style="right:1423.5px">2021.04.01 06:19:43</span>
<span class="cell" style="right:1296.5px">buy</span>
<span class="cell" style="right:1194.5px">1.00</span>
<span class="cell" style="right:1067.5px">wti</span>
<span class="cell" style="right:940.5px">59.471</span>
<span class="cell" style="right:813.5px">57.000</span>
<span class="cell" style="right:686.5px">62.000</span>
<span class="cell" style="right:405.5px">2021.04.01 11:52:17</span>
<span class="cell" style="right:278.5px">60.166</span>
<span class="cell" style="right:151.5px">0.00</span>
<span class="cell" style="right:5px">695.00</span>
</div>
<div class="row" style="top:101px;background:#ececec;color:#000;border-top:1px solid #d5d5d5">
<i class="a" style="left:-5px;top:13px;width:8px;height:9px;border-radius:4px;background:#e04a1a"></i>
<span class="cell" style="left:8px;text-align:left">40248584</span>
<span class="cell" style="right:1423.5px">2021.04.01 16:05:40</span>
<span class="cell" style="right:1296.5px">sell</span>
<span class="cell" style="right:1194.5px">1.00</span>
<span class="cell" style="right:1067.5px">gold</span>
<span class="cell" style="right:940.5px">1725.00</span>
<span class="cell" style="right:813.5px">1735.00</span>
<span class="cell" style="right:686.5px">1705.00</span>
<span class="cell" style="right:405.5px">2021.04.01 16:22:02</span>
<span class="cell" style="right:278.5px">1722.66</span>
<span class="cell" style="right:151.5px">0.00</span>
<span class="cell" style="right:5px">234.00</span>
</div>
<i class="a" style="left:145px;top:0;width:1px;height:26px;background:#e5e5e5"></i>
<i class="a" style="left:145px;top:26px;width:1px;height:100px;background:#d0d0d0;mix-blend-mode:multiply"></i>
<i class="a" style="left:427px;top:0;width:1px;height:26px;background:#e5e5e5"></i>
<i class="a" style="left:427px;top:26px;width:1px;height:100px;background:#d0d0d0;mix-blend-mode:multiply"></i>
<i class="a" style="left:553px;top:0;width:1px;height:26px;background:#e5e5e5"></i>
<i class="a" style="left:553px;top:26px;width:1px;height:100px;background:#d0d0d0;mix-blend-mode:multiply"></i>
<i class="a" style="left:655px;top:0;width:1px;height:26px;background:#e5e5e5"></i>
<i class="a" style="left:655px;top:26px;width:1px;height:100px;background:#d0d0d0;mix-blend-mode:multiply"></i>
<i class="a" style="left:782px;top:0;width:1px;height:26px;background:#e5e5e5"></i>
<i class="a" style="left:782px;top:26px;width:1px;height:100px;background:#d0d0d0;mix-blend-mode:multiply"></i>
<i class="a" style="left:909px;top:0;width:1px;height:26px;background:#e5e5e5"></i>
<i class="a" style="left:909px;top:26px;width:1px;height:100px;background:#d0d0d0;mix-blend-mode:multiply"></i>
<i class="a" style="left:1036px;top:0;width:1px;height:26px;background:#e5e5e5"></i>
<i class="a" style="left:1036px;top:26px;width:1px;height:100px;background:#d0d0d0;mix-blend-mode:multiply"></i>
<i class="a" style="left:1163px;top:0;width:1px;height:26px;background:#e5e5e5"></i>
<i class="a" style="left:1163px;top:26px;width:1px;height:100px;background:#d0d0d0;mix-blend-mode:multiply"></i>
<i class="a" style="left:1444px;top:0;width:1px;height:26px;background:#e5e5e5"></i>
<i class="a" style="left:1444px;top:26px;width:1px;height:100px;background:#d0d0d0;mix-blend-mode:multiply"></i>
<i class="a" style="left:1571px;top:0;width:1px;height:26px;background:#e5e5e5"></i>
<i class="a" style="left:1571px;top:26px;width:1px;height:100px;background:#d0d0d0;mix-blend-mode:multiply"></i>
<i class="a" style="left:1698px;top:0;width:1px;height:26px;background:#e5e5e5"></i>
<i class="a" style="left:1698px;top:26px;width:1px;height:100px;background:#d0d0d0;mix-blend-mode:multiply"></i>
<i class="a" style="left:1845px;top:0;width:1px;height:26px;background:#e5e5e5"></i>
<div class="row" style="top:126px;background:#c8c8c8;font-weight:bold">
<span class="cell" style="left:8px;text-align:left;font-size:15.6px;word-spacing:-0.6px;top:0">盈/亏: 1 276.45&nbsp; 信用额: 0.00&nbsp; 存款: 0.00&nbsp; 取款: 0.00</span>
<span class="cell" style="right:5px;font-size:15.6px;top:0">1 276.45</span>
</div>
<div class="a" style="left:1846px;top:0;width:22px;height:166px;background:#f0f0f0"></div>
<div class="a" style="left:1848px;top:58px;width:18px;height:89px;background:#cdcdcd"></div>
<svg class="a" style="left:1851px;top:6px" width="12" height="10" viewBox="0 0 12 10"><path d="M1.8 7.5L6 3.2L10.2 7.5" stroke="#555" stroke-width="2" fill="none"/></svg>
<svg class="a" style="left:1851px;top:152px" width="12" height="10" viewBox="0 0 12 10"><path d="M1.8 2.5L6 6.8L10.2 2.5" stroke="#555" stroke-width="2" fill="none"/></svg>
</div>
<i class="a" style="left:1868px;top:358px;width:3px;height:170px;background:#f0f0f0"></i>
<div class="a" id="ttabs" style="left:0;top:524px;width:1871px;height:34px;background:#f0f0f0;overflow:hidden">
<i class="a" style="left:0;top:0;width:1871px;height:3px;background:#fff"></i>
<i class="a" style="left:0;top:3px;width:1871px;height:1px;background:#000"></i>
<div class="a" style="left:93px;top:3px;width:85px;height:25px;background:#fff;border:1px solid #000;border-top:0;box-shadow:1px 1px 0 #8a8a8a"></div>
<span class="t g" style="right:1845px;top:6px;font-size:15px">交易</span>
<span class="t g" style="left:51px;top:6px;font-size:15px">展示</span>
<span class="t " style="left:106px;top:6px;font-size:15px">账户历史</span>
<span class="t g" style="left:191px;top:6px;font-size:15px">新闻</span>
<span class="t g" style="left:246px;top:6px;font-size:15px">警报</span>
<span class="t g" style="left:301px;top:6px;font-size:15px">邮箱</span>
<span class="t" style="left:334px;top:10px;font-size:12px;font-weight:bold;color:#e8112d">6</span>
<span class="t g" style="left:366px;top:6px;font-size:15px">公司</span>
<span class="t g" style="left:421px;top:6px;font-size:15px">市场</span>
<span class="t" style="left:454px;top:10px;font-size:12px;font-weight:bold;color:#e8112d">135</span>
<span class="t g" style="left:499px;top:6px;font-size:15px">信号</span>
<span class="t g" style="left:555px;top:6px;font-size:15px">文章</span>
<span class="t" style="left:588px;top:10px;font-size:12px;font-weight:bold;color:#e8112d">1</span>
<span class="t g" style="left:620px;top:6px;font-size:15px">代码库</span>
<span class="t g" style="left:690px;top:6px;font-size:15px">EA</span>
<span class="t g" style="left:734px;top:6px;font-size:15px">日志</span>
<i class="sep" style="left:38px;top:7px;height:19px"></i>
<i class="sep" style="left:233px;top:7px;height:19px"></i>
<i class="sep" style="left:288px;top:7px;height:19px"></i>
<i class="sep" style="left:353px;top:7px;height:19px"></i>
<i class="sep" style="left:408px;top:7px;height:19px"></i>
<i class="sep" style="left:487px;top:7px;height:19px"></i>
<i class="sep" style="left:542px;top:7px;height:19px"></i>
<i class="sep" style="left:607px;top:7px;height:19px"></i>
<i class="sep" style="left:677px;top:7px;height:19px"></i>
<i class="sep" style="left:721px;top:7px;height:19px"></i>
<i class="sep" style="left:777px;top:7px;height:19px"></i>
<i class="a" style="left:0;top:31px;width:1871px;height:1px;background:#fcfcfc"></i>
</div>
<i class="a" style="left:0;top:559px;width:1873px;height:1px;background:#a0a0a0"></i>
<div class="a" id="status" style="left:0;top:560px;width:1873px;height:29px;background:#f0f0f0;overflow:hidden">
<span class="t" style="right:1785px;top:7px;font-size:15px">寻求帮助,请按F1键</span>
<span class="t" style="left:906px;top:7px;font-size:15.5px;letter-spacing:.4px">Default</span>
<i class="sep" style="left:900px;top:4px;height:24px;background:#a0a0a0"></i>
<i class="sep" style="left:1056px;top:4px;height:24px;background:#a0a0a0"></i>
<i class="sep" style="left:1200px;top:4px;height:24px;background:#a0a0a0"></i>
<i class="sep" style="left:1298px;top:4px;height:24px;background:#a0a0a0"></i>
<i class="sep" style="left:1396px;top:4px;height:24px;background:#a0a0a0"></i>
<i class="sep" style="left:1490px;top:4px;height:24px;background:#a0a0a0"></i>
<i class="sep" style="left:1586px;top:4px;height:24px;background:#a0a0a0"></i>
<i class="sep" style="left:1677px;top:4px;height:24px;background:#a0a0a0"></i>
<svg class="a" style="left:1683px;top:7px" width="31" height="17" viewBox="0 0 31 17" shape-rendering="crispEdges"><rect x="0" y="0" width="3" height="12.0" fill="#5a7d00"/><rect x="0" y="13.0" width="3" height="3.0" fill="#a01800"/><rect x="4" y="0" width="3" height="10.4" fill="#5a7d00"/><rect x="4" y="11.4" width="3" height="4.6" fill="#a01800"/><rect x="8" y="0" width="3" height="8.8" fill="#5a7d00"/><rect x="8" y="9.8" width="3" height="6.2" fill="#a01800"/><rect x="12" y="0" width="3" height="7.2" fill="#5a7d00"/><rect x="12" y="8.2" width="3" height="7.8" fill="#a01800"/><rect x="16" y="0" width="3" height="5.6" fill="#5a7d00"/><rect x="16" y="6.6" width="3" height="9.4" fill="#a01800"/><rect x="20" y="0" width="3" height="4.0" fill="#5a7d00"/><rect x="20" y="5.0" width="3" height="11.0" fill="#a01800"/><rect x="24" y="0" width="3" height="2.4" fill="#5a7d00"/><rect x="24" y="3.4" width="3" height="12.6" fill="#a01800"/><rect x="28" y="0" width="3" height="0.8" fill="#5a7d00"/><rect x="28" y="1.8" width="3" height="14.2" fill="#a01800"/></svg>
<span class="t" style="left:1719px;top:7px;font-size:15.5px;letter-spacing:.5px">2599/7 kb</span>
<svg class="a" style="left:1857px;top:14px" width="16" height="16" viewBox="0 0 16 16"><path d="M2 16L16 2M6 16L16 6M10 16L16 10M14 16L16 14" stroke="#b5b5b5" stroke-width="1.3"/></svg>
</div>
<i class="a" style="left:1871px;top:0;width:2px;height:590px;background:#fff"></i>
<i class="a" style="left:1873px;top:0;width:1px;height:590px;background:#1883d7"></i>
<i class="a" style="left:1874px;top:0;width:1px;height:604px;background:#1a1a22"></i>
<div class="a" id="task" style="left:0;top:589px;width:1875px;height:15px;background:linear-gradient(90deg,#0d0b15 0,#0c0a14 8%,#120e1a 22%,#1e0f1c 30%,#1e0f1c 43%,#281e2c 50%,#281e2c 58%,#1a1828 64%,#1a1828 72%,#2a1519 79%,#2a1519 82%,#1c1a20 87%,#1c1a20 100%);border-top:1px solid #1a7fd4;overflow:hidden">
<i class="a" style="left:143px;top:0;width:57px;height:15px;background:#a0551e"></i>
<i class="a" style="left:200px;top:0;width:4px;height:15px;background:#8a4616"></i>
<i class="a" style="left:204px;top:0;width:62px;height:15px;background:#48464b"></i>
<i class="a" style="left:161px;top:11px;width:23px;height:20px;border-radius:50%;background:#1a1210"></i>
<i class="a" style="left:224px;top:10px;width:22px;height:22px;border-radius:50%;border:4px solid #3ab4c8"></i>
<i class="a" style="left:289px;top:10px;width:22px;height:20px;border-radius:10px 0 0 0;background:linear-gradient(90deg,#58b8e8 55%,#f0f0f0 55%)"></i>
<i class="a" style="left:348px;top:12px;width:13px;height:12px;border-radius:50%;background:#35c050"></i>
<i class="a" style="left:407px;top:11px;width:26px;height:12px;border-radius:4px;background:#f0a818"></i>
<span class="t" style="left:1746px;top:5px;font-size:16px;color:#fff">21:43</span>
</div>
</body></html>
